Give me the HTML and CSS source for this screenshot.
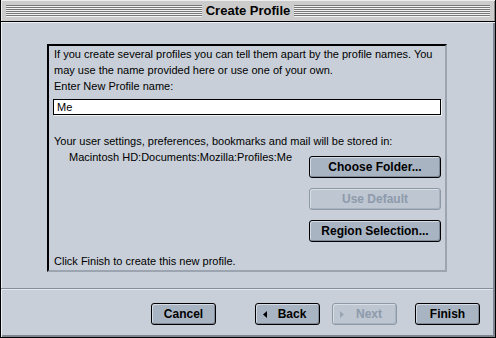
FILE: index.html
```html
<!DOCTYPE html>
<html>
<head>
<meta charset="utf-8">
<title>Create Profile</title>
<link rel="stylesheet" href="styles.css">
</head>
<body>
<div class="window">
  <div class="titlebar">
    <div class="stripes"></div>
    <div class="title">Create Profile</div>
    <div class="stripes"></div>
  </div>
  <div class="content">
    <div class="group">
      <p class="line2">If you create several profiles you can tell them apart by the profile names. You may use the name provided here or use one of your own.</p>
      <p class="line">Enter New Profile name:</p>
      <div class="field">Me</div>
      <p class="line gap-top">Your user settings, preferences, bookmarks and mail will be stored in:</p>
      <div class="folder-row">
        <div class="path">Macintosh HD:Documents:Mozilla:Profiles:Me</div>
        <div class="folder-buttons">
          <div class="btn">Choose Folder...</div>
          <div class="btn disabled">Use Default</div>
          <div class="btn">Region Selection...</div>
        </div>
      </div>
      <p class="line finish-note">Click Finish to create this new profile.</p>
    </div>
    <div class="separator"></div>
    <div class="actions">
      <div class="btn nav cancel">Cancel</div>
      <div class="btn nav arrowed back">
        <svg class="arrow" width="4" height="7" viewBox="0 0 4 7"><polygon points="4,0 4,7 0,3.5" fill="#000"/></svg>
        <span class="label">Back</span>
      </div>
      <div class="btn nav arrowed disabled next">
        <svg class="arrow" width="4" height="7" viewBox="0 0 4 7"><polygon points="0,0 0,7 4,3.5" fill="#9aa5b4"/></svg>
        <span class="label">Next</span>
      </div>
      <div class="btn nav finish">Finish</div>
    </div>
  </div>
</div>
</body>
</html>
```
FILE: styles.css
```css
html, body {
  margin: 0;
  padding: 0;
  background: #c8cfd8;
}
.window {
  width: 496px;
  height: 338px;
  box-sizing: border-box;
  border-left: 1px solid #000;
  border-right: 1px solid #000;
  border-bottom: 1px solid #000;
  display: flex;
  flex-direction: column;
  font-family: "Liberation Sans", Arial, sans-serif;
  color: #000;
}
.titlebar {
  height: 22px;
  box-sizing: border-box;
  background: #cccccc;
  border-bottom: 1px solid #000;
  box-shadow: inset 1px 1px 0 #eeeeee, inset -1px 0 0 #888888;
  display: flex;
  align-items: center;
  padding: 0 5px 0 5px;
}
.stripes {
  flex: 1;
  height: 12px;
  background: repeating-linear-gradient(to bottom, #777777 0 1px, #f2f2f2 1px 2px);
}
.title {
  font-weight: bold;
  font-size: 13px;
  line-height: 20px;
  padding: 0 4px 0 4px;
}
.content {
  flex: 1;
  background: #c8cfd8;
  box-shadow: inset 1px 1px 0 #eef1f4, inset -2px -2px 0 #7d8591;
  display: flex;
  flex-direction: column;
}
.group {
  margin: 22px 0 0 46px;
  width: 400px;
  box-sizing: border-box;
  border-top: 2px solid #000;
  border-left: 2px solid #000;
  border-right: 2px solid #9ba4af;
  border-bottom: 2px solid #9ba4af;
  padding: 0 4px 1px 4px;
  font-size: 11px;
  line-height: 16px;
}
.group p {
  margin: 0;
}
.line2 {
  padding-left: 1px;
}
.line {
  padding-left: 1px;
}
.field {
  margin-top: 5px;
  height: 16px;
  box-sizing: border-box;
  background: #fff;
  border: 1px solid #000;
  box-shadow: 1px 1px 0 #eef1f4;
  padding-left: 3px;
  line-height: 14px;
  font-size: 11px;
}
.gap-top {
  margin-top: 18px !important;
}
.folder-row {
  display: flex;
  justify-content: space-between;
  align-items: flex-start;
}
.path {
  margin-left: 16px;
  line-height: 16px;
}
.folder-buttons {
  margin-top: 7px;
  width: 132px;
  display: flex;
  flex-direction: column;
  gap: 10px;
}
.finish-note {
  margin-top: 11px !important;
}
.btn {
  height: 22px;
  box-sizing: border-box;
  border: 1px solid #000;
  border-radius: 3px;
  background: #a9b4c3;
  box-shadow: inset 1px 1px 0 #d3dae3, inset -1px -1px 0 #7e8998;
  font-weight: bold;
  font-size: 12px;
  line-height: 20px;
  text-align: center;
  color: #000;
}
.btn.disabled {
  border-color: #8e99a8;
  background: #bdc6d1;
  box-shadow: inset 1px 1px 0 #d8dee6, inset -1px -1px 0 #a9b3c0;
  color: #8e9aab;
}
.separator {
  margin-top: 16px;
  margin-right: 2px;
  height: 1px;
  background: #858e9b;
  border-bottom: 1px solid #e4e8ed;
}
.actions {
  display: flex;
  margin-top: 13px;
  padding-right: 15px;
  justify-content: flex-end;
}
.nav {
  width: 65px;
}
.cancel {
  margin-right: 39px;
}
.back {
  margin-right: 12px;
}
.next {
  margin-right: 18px;
}
.arrowed {
  display: flex;
  align-items: center;
  padding: 0 0 0 7px;
}
.arrowed .arrow {
  flex: none;
}
.arrowed .label {
  flex: 1;
  text-align: center;
  padding-right: 2px;
}
```
